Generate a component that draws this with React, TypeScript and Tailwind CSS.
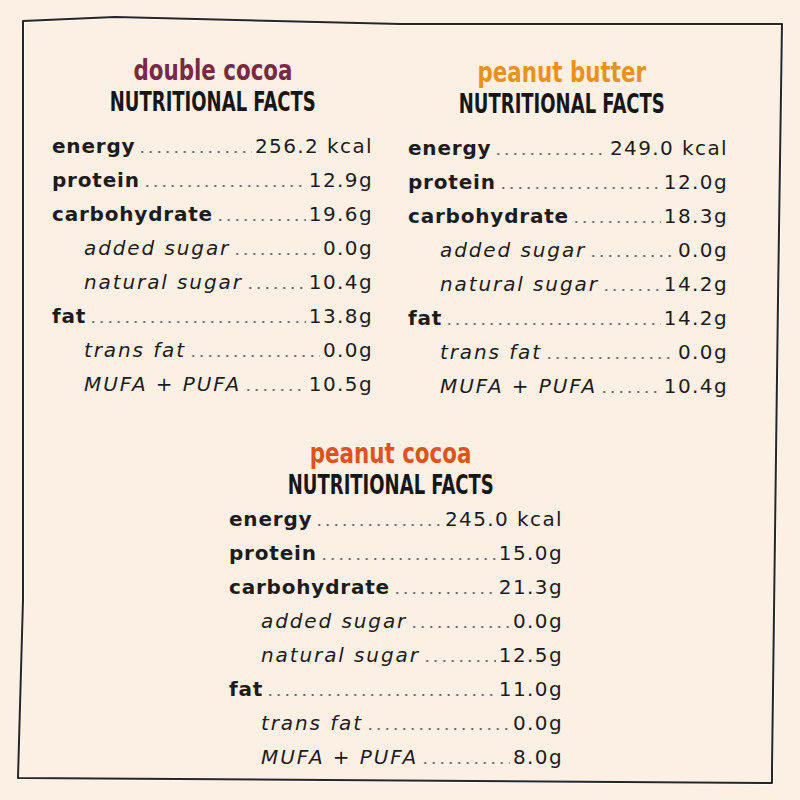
import React from 'react';

type Row = { label: string; value: string; sub?: boolean };

type Facts = { name: string; color: string; rows: Row[] };

const mk = (v: string[]): Row[] => [
  { label: 'energy', value: v[0] },
  { label: 'protein', value: v[1] },
  { label: 'carbohydrate', value: v[2] },
  { label: 'added sugar', value: v[3], sub: true },
  { label: 'natural sugar', value: v[4], sub: true },
  { label: 'fat', value: v[5] },
  { label: 'trans fat', value: v[6], sub: true },
  { label: 'MUFA + PUFA', value: v[7], sub: true },
];

const DOUBLE: Facts = {
  name: 'double cocoa',
  color: 'text-[#7a2944]',
  rows: mk(['256.2 kcal', '12.9g', '19.6g', '0.0g', '10.4g', '13.8g', '0.0g', '10.5g']),
};
const PEANUT: Facts = {
  name: 'peanut butter',
  color: 'text-[#e8921c]',
  rows: mk(['249.0 kcal', '12.0g', '18.3g', '0.0g', '14.2g', '14.2g', '0.0g', '10.4g']),
};
const PCOCOA: Facts = {
  name: 'peanut cocoa',
  color: 'text-[#e1521b]',
  rows: mk(['245.0 kcal', '15.0g', '21.3g', '0.0g', '12.5g', '11.0g', '0.0g', '8.0g']),
};

function FactRow({ row }: { row: Row }) {
  return (
    <div className="flex items-baseline h-[34px] text-[20px] leading-[34px] text-[#1c1c1c]">
      {row.sub ? (
        <span className="pl-[32px] italic font-light tracking-[1.9px]">{row.label}</span>
      ) : (
        <span className="font-bold tracking-[0.8px]">{row.label}</span>
      )}
      <span className="flex-1 h-[2px] mx-[3px] bg-[radial-gradient(circle,#555_0.9px,transparent_1.2px)] bg-[length:8.5px_2px] bg-repeat-x" />
      <span className="tracking-[1.4px]">{row.value}</span>
    </div>
  );
}

function Panel({ facts, shift, gap }: { facts: Facts; shift: string; gap: string }) {
  return (
    <div>
      <div className={`flex flex-col items-center ${shift}`}>
        <h2
          className={`font-['DejaVu_Sans_Condensed',sans-serif] font-bold text-[29px] leading-[32px] scale-x-[0.82] ${facts.color}`}
        >
          {facts.name}
        </h2>
        <h3 className="font-['DejaVu_Sans_Condensed',sans-serif] font-bold text-[26px] leading-[32px] text-[#161616] scale-x-[0.77]">
          NUTRITIONAL FACTS
        </h3>
      </div>
      <div className={gap}>
        {facts.rows.map((r) => (
          <FactRow key={r.label} row={r} />
        ))}
      </div>
    </div>
  );
}

export default function App() {
  return (
    <div className="relative w-[800px] h-[800px] bg-[#fcefe3] font-['DejaVu_Sans',sans-serif] overflow-hidden">
      <svg className="absolute inset-0" width="800" height="800" viewBox="0 0 800 800" fill="none">
        <path
          d="M24 22 L115 18 L400 25 L783 25 L779 300 L773 770 L773 784 L19 779 L24 600 Z"
          stroke="#ffffff"
          strokeWidth="1.5"
        />
        <path
          d="M23 21 L115 17 L400 24 L782 24 L778 300 L772 770 L772 783 L18 778 L23 600 Z"
          stroke="#262626"
          strokeWidth="2"
          strokeLinejoin="round"
        />
      </svg>

      <div className="relative pt-[54px]">
        <div className="grid grid-cols-[321px_320px] gap-x-[35px] pl-[52px]">
          <Panel facts={DOUBLE} shift="" gap="mt-[11px]" />
          <div className="pt-[2px]">
            <Panel facts={PEANUT} shift="pr-[12px]" gap="mt-[11px]" />
          </div>
        </div>

        <div className="ml-[229px] w-[334px] mt-[34px]">
          <Panel facts={PCOCOA} shift="pr-[10px]" gap="mt-[1px]" />
        </div>
      </div>
    </div>
  );
}
